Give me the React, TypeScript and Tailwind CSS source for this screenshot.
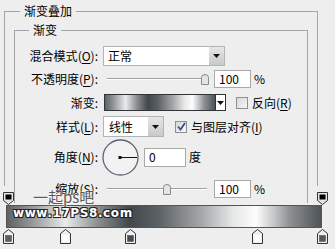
import React from 'react';

const font = { fontFamily: '"Noto Sans CJK SC", "Noto Sans", sans-serif' };

const gradient =
  'linear-gradient(to right, #5d6265 0%, #8d9193 7%, #e9eaea 18.7%, #8a8e90 29%, #41474b 39%, #5b6064 48%, #a5a8aa 62%, #e6e7e7 72%, #fdfdfd 79.4%, #c4c6c7 85%, #8e9193 90%, #4e5357 100%)';

function Mn({ k }: { k: string }) {
  return (
    <>
      (<span className="underline underline-offset-2">{k}</span>):
    </>
  );
}

function Arrow({ className = '' }: { className?: string }) {
  return (
    <svg width="7" height="4" viewBox="0 0 7 4" className={className}>
      <polygon points="0,0 7,0 3.5,4" fill="#111" />
    </svg>
  );
}

function Thumb({ left }: { left: number }) {
  return (
    <svg width="8" height="11" viewBox="0 0 8 11" className="absolute top-[-5px]" style={{ left }}>
      <path d="M0.5 10.5 V3.5 Q0.5 0.5 4 0.5 Q7.5 0.5 7.5 3.5 V10.5 Z" fill="#e4e4e4" stroke="#8a8a8a" />
    </svg>
  );
}

function Slider({ thumb }: { thumb: number }) {
  return (
    <div className="relative ml-[9px] w-[100px] h-[2px] border-t border-[#a0a0a0] border-b border-b-white">
      <Thumb left={thumb} />
    </div>
  );
}

function Box({ children, className = '' }: { children: React.ReactNode; className?: string }) {
  return (
    <div className={`bg-white border border-[#a9a9a9] text-[12px] leading-none flex items-center pl-[4px] ${className}`}>
      {children}
    </div>
  );
}

function Check({ on }: { on?: boolean }) {
  return (
    <div className="w-[12px] h-[12px] border border-[#8e8f8f] bg-gradient-to-br from-[#d8d8d8] to-[#f7f7f7] flex items-center justify-center">
      {on && (
        <svg width="9" height="9" viewBox="0 0 9 9">
          <path d="M1 4.5 L3.5 7.5 L8 1" fill="none" stroke="#3a4f86" strokeWidth="1.8" />
        </svg>
      )}
    </div>
  );
}

function Row({ label, className = '', children }: { label: React.ReactNode; className?: string; children: React.ReactNode }) {
  return (
    <div className={`flex items-center ${className}`}>
      <div className="w-[83px] text-right text-[12px] leading-none whitespace-nowrap">{label}</div>
      {children}
    </div>
  );
}

function TopStop({ x }: { x: number }) {
  return (
    <svg width="11" height="13" viewBox="0 0 11 13" className="absolute top-0" style={{ left: x - 5 }}>
      <path d="M0.5 0.5 H10.5 V8.5 L5.5 12.5 L0.5 8.5 Z" fill="#e6e6e6" stroke="#333" />
      <rect x="2.5" y="2.5" width="6" height="5" fill="#000" />
    </svg>
  );
}

function BottomStop({ x, color }: { x: number; color: string }) {
  return (
    <svg width="11" height="15" viewBox="0 0 11 15" className="absolute top-0" style={{ left: x - 5 }}>
      <path d="M5.5 0.5 L10.5 4.5 V14.5 H0.5 V4.5 Z" fill="#f0f0f0" stroke="#333" />
      <rect x="2.5" y="6.5" width="6" height="6" fill={color} stroke={color === '#fff' ? '#fff' : '#444'} strokeWidth="0.5" />
    </svg>
  );
}

const bottomStops = [
  { x: 8, color: '#5b5f62' },
  { x: 65, color: '#fff' },
  { x: 130, color: '#474c50' },
  { x: 257, color: '#fff' },
  { x: 322, color: '#55595c' },
];

export default function App() {
  return (
    <div className="w-[335px] h-[249px] bg-[#eeeeee] relative overflow-hidden text-black" style={font}>
      <fieldset className="ml-[4px] mt-[3px] w-[314px] h-[183px] border border-b-0 border-[#a5a5a5] px-[9px]">
        <legend className="ml-[6px] px-[4px] text-[12px] leading-[16px]">渐变叠加</legend>
        <fieldset className="mt-[3px] w-[294px] h-[181px] border border-b-0 border-[#a5a5a5]">
          <legend className="ml-[14px] px-[4px] text-[12px] leading-[16px]">渐变</legend>

          <Row className="mt-[8px] h-[20px]" label={<>混合模式<Mn k="O" /></>}>
            <div className="ml-[5px] w-[122px] h-[20px] bg-white border border-[#b4b4b4] flex">
              <div className="flex-1 text-[12px] leading-none flex items-center pl-[4px]">正常</div>
              <div className="w-[15px] h-full bg-gradient-to-b from-[#e6e6e6] to-[#c9c9c9] flex items-center justify-center">
                <Arrow />
              </div>
            </div>
          </Row>

          <Row className="mt-[4px] h-[18px]" label={<>不透明度<Mn k="P" /></>}>
            <Slider thumb={94} />
            <Box className="ml-[7px] w-[37px] h-[18px]">100</Box>
            <span className="ml-[3px] text-[12px] leading-none">%</span>
          </Row>

          <Row className="mt-[6px] h-[17px]" label="渐变:">
            <div className="ml-[6px] flex h-[17px] border border-[#333] bg-white">
              <div className="w-[110px] h-full" style={{ background: gradient }} />
              <div className="w-[10px] h-full border-l border-[#333] flex items-center justify-center">
                <Arrow />
              </div>
            </div>
            <div className="ml-[10px]"><Check /></div>
            <span className="ml-[4px] text-[12px] leading-none">反向(<span className="underline underline-offset-2">R</span>)</span>
          </Row>

          <Row className="mt-[5px] h-[21px]" label={<>样式<Mn k="L" /></>}>
            <div className="ml-[5px] w-[61px] h-[21px] bg-white border border-[#b4b4b4] flex">
              <div className="flex-1 text-[12px] leading-none flex items-center pl-[5px]">线性</div>
              <div className="w-[15px] h-full bg-gradient-to-b from-[#e6e6e6] to-[#c9c9c9] flex items-center justify-center">
                <Arrow />
              </div>
            </div>
            <div className="ml-[11px]"><Check on /></div>
            <span className="ml-[4px] text-[12px] leading-none">与图层对齐(<span className="underline underline-offset-2">I</span>)</span>
          </Row>

          <Row className="mt-[2px] h-[36px]" label={<>角度<Mn k="N" /></>}>
            <svg width="37" height="37" viewBox="0 0 37 37" className="ml-[4px]">
              <circle cx="18.5" cy="18.5" r="17.5" fill="#f2f2f2" stroke="#5d6573" strokeWidth="1.3" />
              <line x1="18.5" y1="18.5" x2="35" y2="18.5" stroke="#111" strokeWidth="1" />
              <rect x="16.5" y="17" width="3" height="3" fill="#111" />
            </svg>
            <Box className="ml-[5px] w-[42px] h-[19px]">0</Box>
            <span className="ml-[3px] text-[12px] leading-none">度</span>
          </Row>

          <Row className="mt-[5px] h-[18px]" label={<>缩放<Mn k="S" /></>}>
            <Slider thumb={56} />
            <Box className="ml-[7px] w-[37px] h-[18px]">100</Box>
            <span className="ml-[3px] text-[12px] leading-none">%</span>
          </Row>
        </fieldset>
      </fieldset>

      {/* pasted gradient editor strip */}
      <div className="absolute left-0 top-[192px] w-[335px] h-[57px]">
        <div className="relative h-[13px]">
          <TopStop x={8} />
          <TopStop x={322} />
        </div>
        <div className="ml-[6px] w-[316px] h-[23px] border border-[#555]" style={{ background: gradient }} />
        <div className="relative h-[15px] mt-[1px]">
          {bottomStops.map((s) => (
            <BottomStop key={s.x} x={s.x} color={s.color} />
          ))}
        </div>
      </div>

      {/* watermark */}
      <div
        className="absolute left-[33px] top-[189px] text-[15px] leading-none text-[#5a5a5a]"
        style={{ textShadow: '0 0 2px #fff, 0 0 2px #fff' }}
      >
        一起ps吧
      </div>
      <div
        className="absolute left-[13px] top-[207px] text-[12px] leading-none font-bold tracking-[0.6px] text-white"
        style={{ fontFamily: '"DejaVu Sans", sans-serif', textShadow: '1px 1px 0 #222, -1px -1px 0 #222, 1px -1px 0 #222, -1px 1px 0 #222' }}
      >
        www.17PS8.com
      </div>
    </div>
  );
}
